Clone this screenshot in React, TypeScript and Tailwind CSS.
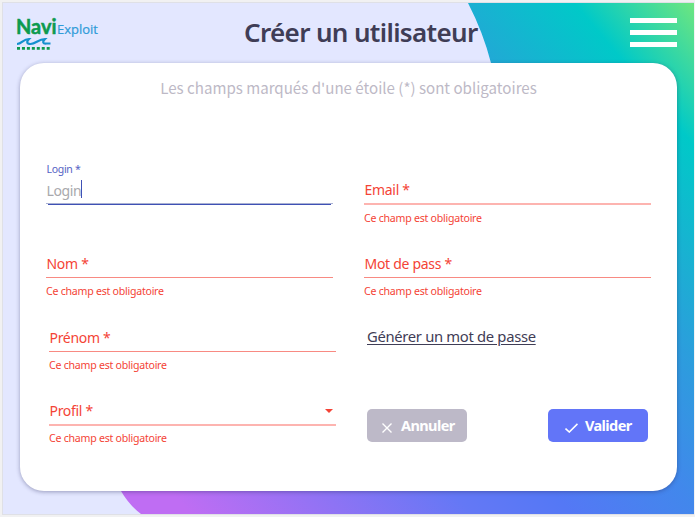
import type { ReactNode } from "react";

const ERROR = "Ce champ est obligatoire";

function Logo() {
  return (
    <svg width="90" height="36" viewBox="0 0 90 36" aria-label="NaviExploit">
      <text x="0" y="19" fontSize="20" fontWeight="700" fill="#0d9a4e" stroke="#0d9a4e" strokeWidth="0.5" textLength="40.5" lengthAdjust="spacingAndGlyphs" fontFamily="Lato, sans-serif">Navi</text>
      <text x="41" y="19" fontSize="13" fill="#2f9bd8" stroke="#2f9bd8" strokeWidth="0.2" textLength="41" lengthAdjust="spacingAndGlyphs" fontFamily="'Open Sans', sans-serif">Exploit</text>
      <path d="M1 29C6 29 7 24 13 24C10 27 11 29 14.500 29C20 29 22 24 29 24C26 27 27 29 30.500 28.500H34.500" fill="none" stroke="#1590cf" strokeWidth="2.200" />
      <path d="M1 33.300H35" fill="none" stroke="#0d9a4e" strokeWidth="2.800" strokeDasharray="3 1.950" />
    </svg>
  );
}

type FieldProps = { label: string; line?: string; arrow?: boolean; shift?: boolean };

function Field({ label, line = "h-px bg-[#f88a82]", arrow, shift }: FieldProps) {
  return (
    <div className={`flex w-[287px] flex-col text-[#f44336] ${shift ? "ml-[3px]" : ""}`}>
      <div className="mt-[20px] flex h-[26px] items-center justify-between text-[14px] leading-[24px]">
        <span className="pl-[0.5px] tracking-[-0.3px]">{label}</span>
        {arrow && (
          <svg width="8" height="4" viewBox="0 0 8 4" className="mr-[3px] mt-[-1px]">
            <path d="M0 0H8L4 4Z" fill="#f44336" />
          </svg>
        )}
      </div>
      <div className={`w-full ${line}`} />
      <span className="mt-[5px] text-[10.600px] leading-[16px] tracking-[-0.250px]">{ERROR}</span>
    </div>
  );
}

function LoginField() {
  return (
    <div className="flex w-[287px] flex-col">
      <span className="mt-[4px] h-[17px] pl-[0.5px] text-[10.500px] leading-[16px] tracking-[-0.300px] text-[#5563c4]">Login *</span>
      <div className="flex h-[25px] items-center text-[14px] leading-[24px] text-[#a9a9ad]">
        <span className="pl-[0.5px] tracking-[-0.400px]">Login</span>
        <span className="mb-[3px] h-[18px] w-px bg-[#3f51b5]" />
      </div>
      <div className="h-px bg-[#a9b1d3]" />
      <div className="mx-[2px] h-px bg-[#3f51b5]" />
    </div>
  );
}

function ActionButton({ color, icon, children }: { color: string; icon: ReactNode; children: ReactNode }) {
  return (
    <button className={`flex h-[33px] w-[100px] items-center rounded-[5px] text-[14.500px] font-bold tracking-[-0.600px] text-white ${color}`}>
      {icon}
      {children}
    </button>
  );
}

export default function App() {
  return (
    <div className="h-[517px] w-[695px] overflow-hidden bg-[#f1f1f2] pl-[2px] pt-[2px] font-['Noto_Sans','Open_Sans',sans-serif]">
      <div className="relative h-[513px] w-[692px] overflow-hidden border-b border-l border-t border-[#dfe0e6] bg-[#e3e7ff]">
        <div className="absolute inset-0 bg-[linear-gradient(50deg,#bf6df3_143px,#6478f5_359px,#5478f5_436px,#4287ec_533px,#2c9ddd_625px,#1caed3_680px,#00c9c8_766px,#6ee67f_858px)] [clip-path:path('M465_0Q480_29_488_60L300_300L118_488Q126_502_138_511H700V0Z')]" />
        <div className="relative flex h-full flex-col">
          <header className="flex h-[60px] shrink-0 items-start">
            <div className="ml-[13px] mt-[12px] w-[228px]">
              <Logo />
            </div>
            <h1 className="mt-[11px] w-[236px] whitespace-nowrap text-[26px] font-semibold leading-[36px] tracking-[-0.650px] text-[#3f3d56]">
              Créer un utilisateur
            </h1>
            <div className="ml-[150px] mt-[15px] flex w-[47px] flex-col gap-[7px]">
              <div className="h-[5px] bg-white" />
              <div className="h-[5px] bg-white" />
              <div className="h-[5px] bg-white" />
            </div>
          </header>
          <main className="ml-[17px] h-[428px] w-[657px] rounded-[24px] bg-white shadow-[0_1px_4px_rgba(40,40,90,0.4)]">
            <p className="h-[94px] whitespace-nowrap pt-[12px] text-center text-[15.100px] leading-[24px] text-[#bdb9c6] font-['Noto_Sans_CJK_SC',sans-serif]">
              Les champs marqués d'une étoile (*) sont obligatoires
            </p>
            <div className="grid grid-cols-[318px_290px] grid-rows-[74px_74px_73px_74px] pl-[26px]">
              <LoginField />
              <Field label="Email *" line="h-[2px] bg-[#fdb4b0]" />
              <Field label="Nom *" />
              <Field label="Mot de pass *" />
              <Field label="Prénom *" shift />
              <div className="ml-[3px] mt-[19px] whitespace-nowrap text-[14.800px] leading-[24px] tracking-[-0.320px] text-[#3f3d56] underline underline-offset-2">
                Générer un mot de passe
              </div>
              <Field label="Profil *" shift arrow line="h-[2px] -mb-px bg-[#fdb4b0]" />
              <div className="ml-[3px] mt-[31px] flex h-[33px] w-[281px] justify-between">
                <ActionButton
                  color="bg-[#bdb9c8]"
                  icon={
                    <svg width="10" height="10" viewBox="0 0 10 10" className="ml-[15px] mr-[9px] mt-[5px]">
                      <path d="M0.500 0.500L9.500 9.500M9.500 0.500L0.500 9.500" stroke="white" strokeWidth="1.400" />
                    </svg>
                  }
                >
                  Annuler
                </ActionButton>
                <ActionButton
                  color="bg-[#6275f8]"
                  icon={
                    <svg width="13" height="10" viewBox="0 0 13 10" className="ml-[17px] mr-[7px] mt-[5px]">
                      <path d="M0.500 5.500L4.300 9L12.500 0.900" fill="none" stroke="white" strokeWidth="1.600" />
                    </svg>
                  }
                >
                  Valider
                </ActionButton>
              </div>
            </div>
          </main>
        </div>
      </div>
    </div>
  );
}
